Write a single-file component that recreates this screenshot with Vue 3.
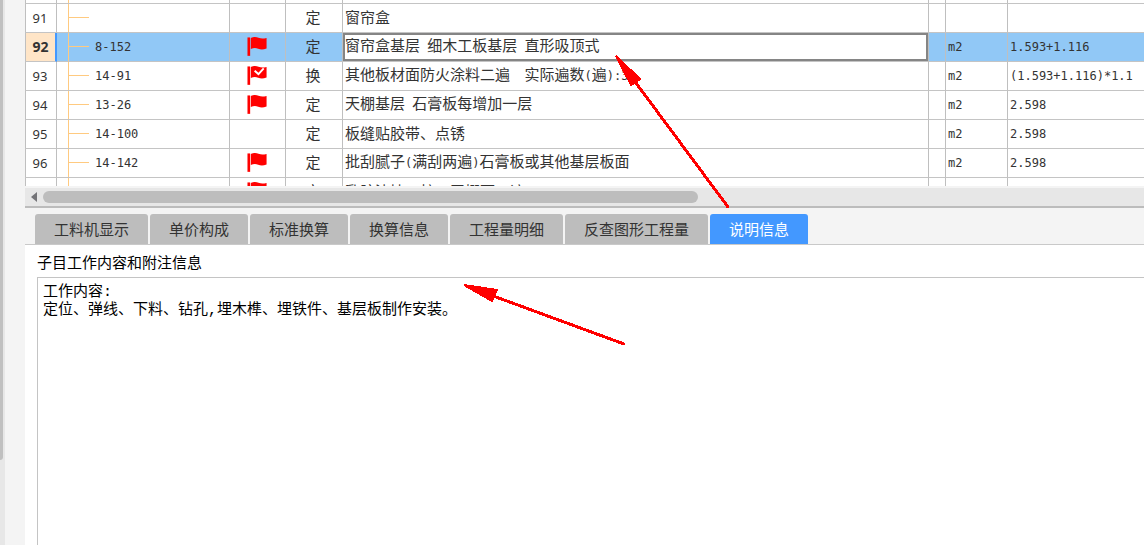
<script setup>
const rows = [
  { no: 91, code: '', flag: '', type: '定', name: '窗帘盒', unit: '', qty: '' },
  { no: 92, code: '8-152', flag: 'plain', type: '定', name: '窗帘盒基层 细木工板基层 直形吸顶式', unit: 'm2', qty: '1.593+1.116', active: true },
  { no: 93, code: '14-91', flag: 'check', type: '换', name: '其他板材面防火涂料二遍  实际遍数(遍):3', unit: 'm2', qty: '(1.593+1.116)*1.1' },
  { no: 94, code: '13-26', flag: 'plain', type: '定', name: '天棚基层 石膏板每增加一层', unit: 'm2', qty: '2.598' },
  { no: 95, code: '14-100', flag: '', type: '定', name: '板缝贴胶带、点锈', unit: 'm2', qty: '2.598' },
  { no: 96, code: '14-142', flag: 'plain', type: '定', name: '批刮腻子(满刮两遍)石膏板或其他基层板面', unit: 'm2', qty: '2.598' },
  { no: 97, code: '14-188', flag: 'plain', type: '定', name: '乳胶漆墙、柱、天棚面二遍', unit: 'm2', qty: '2.598' },
]
const tabs = ['工料机显示', '单价构成', '标准换算', '换算信息', '工程量明细', '反查图形工程量', '说明信息']
const note = '工作内容:\n定位、弹线、下料、钻孔,埋木榫、埋铁件、基层板制作安装。'

// Splits a label into full-width and half-width runs
const runs = (text) =>
  (text.match(/[\x20-\x7e]+|[^\x20-\x7e]+/g) || []).map((t) => ({ t, half: /^[\x20-\x7e]/.test(t) }))
</script>

<template>
  <div class="app">
    <aside class="rail"><div class="rail-thumb"></div></aside>
    <main class="main">
      <div class="grid-view">
        <table class="grid">
          <colgroup>
            <col class="c-no"><col class="c-code"><col class="c-flag"><col class="c-type">
            <col><col class="c-gap"><col class="c-unit"><col class="c-qty">
          </colgroup>
          <tbody>
            <tr class="sliver"><td></td><td class="code"><i class="trunk"></i></td><td></td><td></td><td></td><td></td><td></td><td></td></tr>
            <tr v-for="r in rows" :key="r.no" :class="{ active: r.active }">
              <th scope="row" class="no">{{ r.no }}</th>
              <td class="code"><i class="trunk"></i><i class="twig"></i><span class="half">{{ r.code }}</span></td>
              <td class="flag">
                <svg v-if="r.flag" width="21" height="21" viewBox="0 0 22 22" role="img" aria-label="标记">
                  <path d="M.5 1.500h2.800v19.300H.5z" fill="#f00" />
                  <path d="M4 2.200C7.500.3 10 1 12 1.800c3 1.100 5 1 8.500.200v11c-3.500 1.300-6 1.300-8.800.300-2.700-1-5-.900-7.700.4z" fill="#f00" />
                  <path v-if="r.flag === 'check'" d="M8 6l4 3.500 5.500-6" fill="none" stroke="#fff" stroke-width="2" />
                </svg>
              </td>
              <td class="type">{{ r.type }}</td>
              <td class="name"><span v-for="(s, i) in runs(r.name)" :key="i" :class="{ half: s.half }">{{ s.t }}</span></td>
              <td></td>
              <td class="unit"><span class="half">{{ r.unit }}</span></td>
              <td class="qty"><span class="half">{{ r.qty }}</span></td>
            </tr>
          </tbody>
        </table>
      </div>
      <div class="scroll">
        <button class="scroll-left" aria-label="向左滚动">
          <svg width="6" height="10" viewBox="0 0 6 10"><path d="M6 0v10L0 5z" fill="#747478" /></svg>
        </button>
        <div class="track"><div class="thumb"></div></div>
      </div>
      <nav class="tabs" role="tablist">
        <button v-for="(t, i) in tabs" :key="t" role="tab" :aria-selected="i === 6" :class="['tab', { on: i === 6 }]">{{ t }}</button>
      </nav>
      <section class="panel">
        <label for="note">子目工作内容和附注信息</label>
        <textarea id="note" :value="note" readonly></textarea>
      </section>
    </main>
    <svg class="marks" width="1144" height="545" viewBox="0 0 1144 545" aria-hidden="true">
      <g stroke="#f00" stroke-width="3" fill="#f00" stroke-linecap="round" shape-rendering="crispEdges">
        <path d="M728 207L636 83" />
        <path d="M624 344L496 297" />
        <path d="M616 56L640 79L631 85Z" stroke-width="2" />
        <path d="M464 285L497 290L492 301Z" stroke-width="2" />
      </g>
    </svg>
  </div>
</template>

<style>
html, body, #app { height: 100%; }
body { margin: 0; overflow: hidden; }
</style>

<style scoped>
* { box-sizing: border-box; }
.app {
  position: relative;
  display: flex;
  height: 100%;
  background: #f4f4f4;
  color: #333;
  font-family: "Noto Sans CJK SC", sans-serif;
  font-size: 15px;
}
.rail { width: 5px; background: #e7e7e7; flex: none; }
.rail-thumb { width: 3px; height: 460px; background: #c0c0c0; border-radius: 0 0 3px 0; }
.main { flex: 1; min-width: 0; margin-left: 20px; display: flex; flex-direction: column; background: #fff; }
.grid-view { height: 186px; overflow: hidden; flex: none; }
.grid { width: 100%; table-layout: fixed; border-collapse: separate; border-spacing: 0; }
.c-no { width: 32px; }
.c-code { width: 173px; }
.c-flag { width: 56px; }
.c-type { width: 57px; }
.c-gap { width: 17px; }
.c-unit { width: 62px; }
.c-qty { width: 136px; }
.grid td, .grid th {
  height: 29px;
  padding: 0 0 3px;
  line-height: 20px;
  font-weight: 400;
  border-right: 1px solid #bfbfbf;
  border-bottom: 1px solid #c4c4c4;
  white-space: pre;
  overflow: hidden;
}
.grid td:first-child, .grid th { border-left: 1px solid #bfbfbf; }
.grid td:last-child { border-right: 0; }
.grid .sliver td { height: 4px; }
.half { font-family: "DejaVu Sans Mono", monospace; font-size: 12px; }
.grid .no { font-family: "Noto Sans", sans-serif; font-size: 13px; text-align: center; padding: 0 2px 1px 0; }
.code { position: relative; }
.grid .code { padding-left: 38px; }
.trunk { position: absolute; left: 11px; top: 0; bottom: -1px; width: 1px; background: #ffca80; }
.twig { position: absolute; left: 11px; top: 13px; width: 21px; height: 1px; background: #ffca80; }
.flag, .type { text-align: center; }
.grid .flag { padding-bottom: 1px; }
.grid .type { padding-right: 2px; }
.flag svg { display: block; margin: 0 auto; }
.grid .name { padding-left: 2px; }
.grid .unit, .grid .qty { padding-left: 2px; }
.active td { background: #91c8f6; }
.grid .active .no { background: #ffe5c7; font-weight: 700; font-size: 14px; padding-right: 0; border-right: 2px solid #4398ff; }
.grid .active .name { background: #fff; box-shadow: inset 0 0 0 2px #858585; }
.scroll { height: 22px; flex: none; display: flex; align-items: center; background: #e7e7e7; border-bottom: 2px solid #bcbcbc; border-top: 2px solid #f4f4f4; }
.scroll-left { width: 18px; height: 14px; border: 0; padding: 0 0 0 6px; background: none; display: flex; align-items: center; }
.track { flex: 1; height: 12px; }
.thumb { width: 59.500%; height: 12px; border-radius: 6px; background: #bdbdbd; }
.tabs { height: 37px; flex: none; display: flex; align-items: stretch; gap: 2px; padding: 6px 10px 0; background: #f4f4f4; border-bottom: 1px solid #c9c9c9; }
.tab {
  border: 0;
  border-radius: 3px 3px 0 0;
  padding: 0 19px;
  background: #bdbdbd;
  color: #333;
  font: inherit;
  line-height: 20px;
  white-space: nowrap;
}
.tab.on { background: #4398ff; color: #fff; }
.panel { flex: 1; min-height: 0; display: flex; flex-direction: column; padding-left: 12px; color: #000; }
.panel label { height: 32px; line-height: 34px; }
.panel textarea {
  flex: 1;
  margin: 0;
  padding: 6px 5px;
  border: 1px solid #c4c4c4;
  border-width: 1px 0 0 1px;
  outline: 0;
  resize: none;
  background: #fff;
  color: #000;
  font-family: "Liberation Mono", "Noto Sans CJK SC", monospace;
  font-size: 15px;
  line-height: 18px;
}
.marks { position: absolute; left: 0; top: 0; pointer-events: none; }
</style>
